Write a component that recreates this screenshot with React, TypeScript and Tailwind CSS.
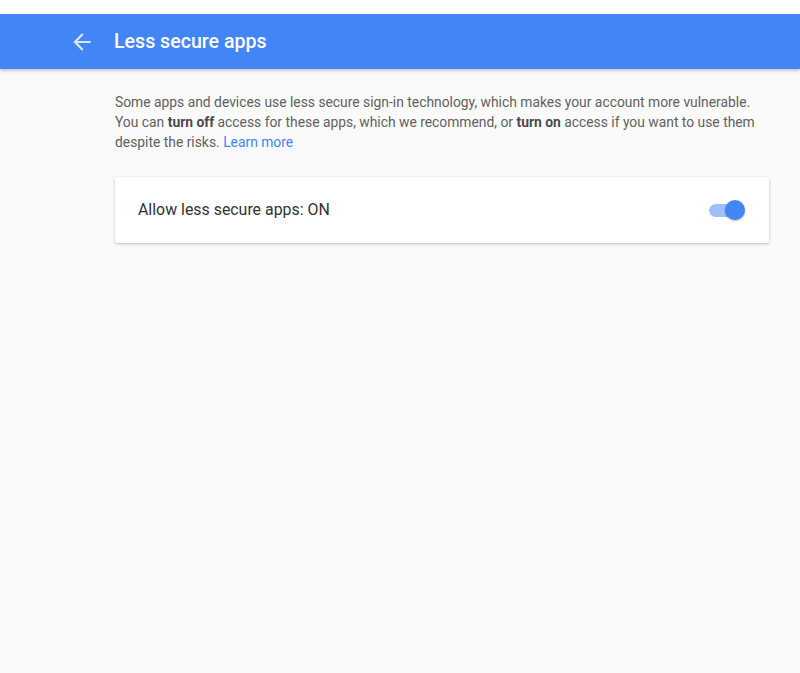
const App = () => {
    return (
        <div className="w-[800px] h-[673px] bg-[#fafafa] flex flex-col" style={{ fontFamily: 'Roboto, "Liberation Sans", sans-serif' }}>
            {/* top white strip */}
            <div className="h-[14px] bg-white" />

            {/* Header */}
            <div className="h-[55px] bg-[#4285f4] flex items-center shadow-[0_2px_3px_rgba(0,0,0,0.2)] z-10">
                <button className="ml-[69px] w-[26px] h-[26px] flex items-center justify-center text-white/80">
                    <svg width="26" height="26" viewBox="0 0 24 24" fill="currentColor">
                        <path d="M20 11H7.83l5.59-5.59L12 4l-8 8 8 8 1.41-1.41L7.83 13H20v-2z" />
                    </svg>
                </button>
                <h1 className="ml-[19px] text-white text-[19.6px] font-medium">Less secure apps</h1>
            </div>

            {/* Content */}
            <div className="pl-[115px] pr-[31px] pt-[23px]">
                <p className="text-[13.85px] leading-[20px] text-[#616161]">
                    Some apps and devices use less secure sign-in technology, which makes your account more vulnerable.
                    You can <b className="font-bold text-[#4a4a4a]">turn off</b> access for these apps, which we recommend, or <b className="font-bold text-[#4a4a4a]">turn on</b> access if you want to use them
                    despite the risks. <a className="text-[#4285f4]">Learn more</a>
                </p>

                <div className="mt-[25px] h-[66px] bg-white rounded-[2px] shadow-[0_1px_3px_rgba(0,0,0,0.25)] flex items-center justify-between pl-[23px] pr-[24px]">
                    <span className="text-[15.9px] text-[#333]">Allow less secure apps: ON</span>

                    {/* Toggle */}
                    <div className="relative w-[36px] h-[20px] flex items-center">
                        <div className="w-[34px] h-[13px] rounded-full bg-[#9fc1f9]" />
                        <div className="absolute right-0 w-[20px] h-[20px] rounded-full bg-[#4285f4] shadow-[0_1px_2px_rgba(0,0,0,0.3)]" />
                    </div>
                </div>
            </div>
        </div>
    )
}

export default App
